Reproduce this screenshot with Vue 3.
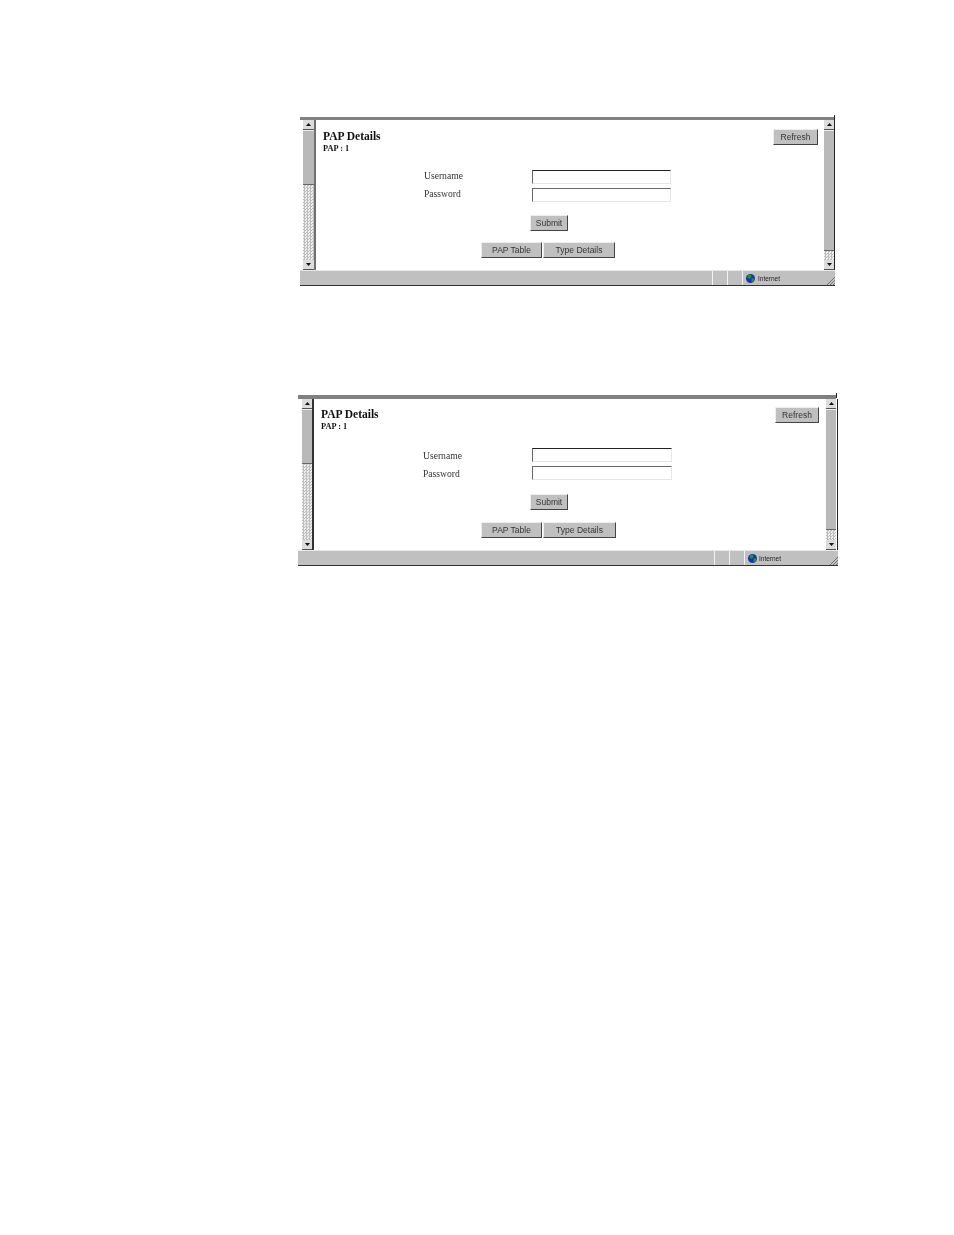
<script setup>
const windows = [
  { id: 'first' },
  { id: 'second' }
]
</script>

<template>
  <main class="page">
    <section v-for="w in windows" :key="w.id" class="win" :class="w.id">
      <div class="topline"></div>
      <div class="body">
        <div class="scroll left">
          <div class="sbtn"><svg width="5" height="3" viewBox="0 0 5 3"><path d="M2.5 0 5 3H0z" fill="#111"/></svg></div>
          <div class="thumb"></div>
          <div class="track"></div>
          <div class="sbtn"><svg width="5" height="3" viewBox="0 0 5 3"><path d="M0 0h5L2.500 3z" fill="#111"/></svg></div>
        </div>
        <div class="divider"></div>
        <div class="content">
          <div class="head">
            <div>
              <h1>PAP Details</h1>
              <p class="sub">PAP : 1</p>
            </div>
            <button class="btn refresh">Refresh</button>
          </div>
          <div class="form">
            <label class="row"><span>Username</span><i class="input dark"></i></label>
            <label class="row"><span>Password</span><i class="input"></i></label>
          </div>
          <button class="btn submit">Submit</button>
          <div class="nav">
            <button class="btn pap">PAP Table</button>
            <button class="btn type">Type Details</button>
          </div>
        </div>
        <div class="scroll right">
          <div class="sbtn"><svg width="5" height="3" viewBox="0 0 5 3"><path d="M2.5 0 5 3H0z" fill="#111"/></svg></div>
          <div class="thumb"></div>
          <div class="track"></div>
          <div class="sbtn"><svg width="5" height="3" viewBox="0 0 5 3"><path d="M0 0h5L2.500 3z" fill="#111"/></svg></div>
        </div>
      </div>
      <footer class="status">
        <div class="cell grow"></div>
        <div class="cell small"></div>
        <div class="cell small"></div>
        <div class="cell zone">
          <svg class="globe" width="9" height="9" viewBox="0 0 9 9">
            <circle cx="4.500" cy="4.500" r="4.500" fill="#123a9c"/>
            <path d="M2 1 5 .5 5.500 3 3.500 5 1.500 3.500zM5.500 4.500 8.500 4 7.500 7.500 5.500 8.500z" fill="#2f8a3c"/>
          </svg>
          <span>Internet</span>
        </div>
        <svg class="grip" width="9" height="9" viewBox="0 0 9 9">
          <path d="M9 1 1 9M9 4 4 9M9 7 7 9" stroke="#777" fill="none"/>
        </svg>
      </footer>
    </section>
  </main>
</template>

<style scoped>
.page {
  height: 1235px;
  box-sizing: border-box;
  padding-top: 117px;
  background: #fff;
  overflow: hidden;
}
.win {
  position: relative;
  display: flex;
  flex-direction: column;
  filter: blur(0.3px);
}
.win::after {
  content: "";
  position: absolute;
  top: -2px;
  width: 1px;
  height: 5px;
  background: #222;
}
.win.first { width: 535px; margin-left: 300px; }
.win.first::after { right: 0; }
.win.second { width: 540px; margin-left: 298px; margin-top: 109px; }
.win.second::after { right: 1px; }
.topline { height: 3px; margin-right: 1px; background: #808080; }
.second .topline { height: 4px; margin-right: 2px; }
.body {
  height: 150px;
  display: flex;
  padding-left: 3px;
  border-right: 1px solid #222;
}
.second .body { height: 151px; padding-left: 4px; padding-right: 1px; }
.scroll {
  width: 10px;
  display: flex;
  flex-direction: column;
  flex: none;
}
.first .left { width: 11px; }
.sbtn {
  height: 10px;
  flex: none;
  display: flex;
  align-items: center;
  justify-content: center;
  background: #dcdcdc;
  border-bottom: 1px solid #555;
  box-sizing: border-box;
}
.thumb {
  background: #b9b9b9;
  border-bottom: 1px solid #666;
  border-top: 1px solid #eee;
  box-sizing: border-box;
}
.left .thumb { height: 55px; }
.right .thumb { height: 121px; }
.track {
  flex: 1;
  background-color: #efefef;
  background-image: conic-gradient(#bdbdbd 25%, transparent 0 50%, #bdbdbd 0 75%, transparent 0);
  background-size: 3px 3px;
}
.divider { width: 2px; flex: none; background: #707070; }
.second .divider { background: #333; }
.content {
  flex: 1;
  min-width: 0;
  padding: 9px 6px 0 7px;
  background: #fff;
  color: #111;
  font-family: "Liberation Serif", serif;
}
.second .content { padding: 8px 7px 0 7px; }
.head {
  display: flex;
  justify-content: space-between;
  align-items: flex-start;
  height: 41px;
}
h1 {
  margin: 0;
  font-size: 11.500px;
  line-height: 14px;
  font-weight: 700;
}
.sub {
  margin: 0;
  font-size: 8.300px;
  line-height: 11px;
  font-weight: 700;
}
.btn {
  display: block;
  box-sizing: border-box;
  padding: 0;
  height: 16px;
  background: #c0c0c0;
  border: 1px solid;
  border-color: #eee #444 #444 #eee;
  color: #333;
  font-family: "Liberation Sans", sans-serif;
  font-size: 8.500px;
  line-height: 14px;
  text-align: center;
}
.refresh { width: 45px; }
.second .refresh { width: 44px; }
.form {
  display: flex;
  flex-direction: column;
  gap: 4px;
  padding-left: 101px;
}
.second .form { padding-left: 102px; }
.row {
  display: flex;
  align-items: center;
  height: 14px;
  font-size: 9.600px;
  color: #333;
}
.row span { width: 108px; }
.first .row span { align-self: flex-start; line-height: 12px; }
.second .row span { width: 109px; }
.input {
  display: block;
  width: 139px;
  height: 14px;
  box-sizing: border-box;
  background: #fff;
  border: 1px solid;
  border-color: #666 #e6e6e6 #e6e6e6 #666;
}
.second .input { width: 140px; }
.input.dark { border-top-color: #222; }
.submit { width: 38px; margin: 13px 0 0 207px; }
.second .submit { margin: 14px 0 0 209px; }
.nav {
  display: flex;
  gap: 1px;
  margin: 11px 0 0 158px;
}
.second .nav { margin: 12px 0 0 160px; }
.pap { width: 61px; }
.type { width: 72px; }
.second .type { width: 73px; }
.status {
  height: 16px;
  display: flex;
  align-items: stretch;
  box-sizing: border-box;
  background: #c0c0c0;
  border-top: 1px solid #e8e8e8;
  border-bottom: 1px solid #333;
  font-family: "Liberation Sans", sans-serif;
  font-size: 6.500px;
  color: #222;
}
.cell { box-sizing: border-box; border-left: 1px solid #f2f2f2; }
.grow { flex: 1; border-left: 0; }
.small { width: 15px; }
.zone {
  width: 84px;
  display: flex;
  align-items: center;
  gap: 3px;
  padding-left: 3px;
}
.second .zone { width: 85px; gap: 2px; }
.globe { flex: none; }
.grip { align-self: flex-end; flex: none; }
</style>

<style>
html, body { margin: 0; background: #fff; }
</style>
